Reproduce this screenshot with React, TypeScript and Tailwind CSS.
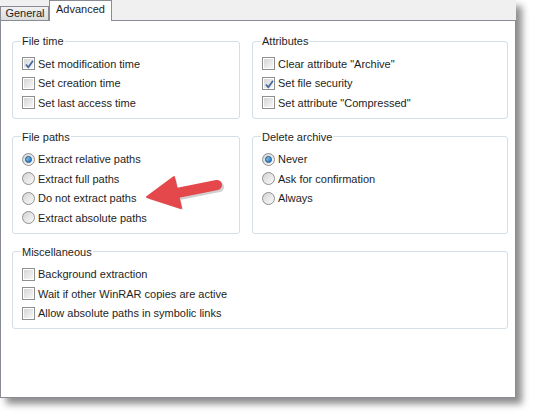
import type { ReactNode } from 'react';

type Opt = { label: string; on?: boolean };

function CheckBox({ on }: { on?: boolean }) {
  return (
    <span className="relative flex h-[13px] w-[13px] shrink-0 items-center justify-center border border-[#8e8f8f] bg-white p-px">
      <span className="h-full w-full bg-gradient-to-br from-[#d6d6d6] to-[#f7f7f7]" />
      {on && (
        <svg viewBox="0 0 11 11" className="absolute left-px top-px h-[11px] w-[11px]">
          <path d="M2 5.5 L4.3 8.3 L9 1.8" fill="none" stroke="#4a67a0" strokeWidth="1.8" />
        </svg>
      )}
    </span>
  );
}

function Radio({ on }: { on?: boolean }) {
  return (
    <span className="flex h-[13px] w-[13px] shrink-0 items-center justify-center rounded-full border border-[#8e8f8f] bg-gradient-to-br from-[#d3d3d3] to-[#fbfbfb]">
      {on && (
        <span className="h-[7px] w-[7px] rounded-full border border-[#1b4f8a] bg-gradient-to-br from-[#8ed0f5] to-[#1d6fbf]" />
      )}
    </span>
  );
}

function Group({ title, children, className = '' }: { title: string; children: ReactNode; className?: string }) {
  return (
    <fieldset className={`rounded-[3px] border border-[#d5dfe5] px-[9px] pb-[5px] pt-[6px] ${className}`}>
      <legend className="ml-[-1px] px-px leading-[14px]">{title}</legend>
      {children}
    </fieldset>
  );
}

function Options({ items, kind }: { items: Opt[]; kind: 'check' | 'radio' }) {
  return (
    <div className="flex flex-col">
      {items.map((it) => (
        <label key={it.label} className="flex h-[19.5px] items-center gap-[3px]">
          {kind === 'check' ? <CheckBox on={it.on} /> : <Radio on={it.on} />}
          <span className="whitespace-nowrap">{it.label}</span>
        </label>
      ))}
    </div>
  );
}

export default function App() {
  return (
    <div
      className="relative h-[415px] w-[533px] overflow-hidden bg-white text-[11px] text-[#1e1e1e]"
      style={{ fontFamily: '"Liberation Sans", Arial, sans-serif' }}
    >
      <div className="flex h-[398px] w-[516px] flex-col bg-[#f0f0f0] shadow-[6px_6px_7px_rgba(0,0,0,0.45)]">
        {/* tab strip */}
        <div className="flex h-[20px] items-end">
          <div className="flex h-[14px] w-[49px] items-center justify-center border border-b-0 border-[#898c95] bg-gradient-to-b from-[#f2f2f2] to-[#dcdcdc] pl-px">
            General
          </div>
          <div className="relative z-10 -mb-px flex h-[21px] w-[63px] items-center justify-center border border-b-0 border-[#898c95] bg-white pb-[3px]">
            Advanced
          </div>
        </div>

        {/* page */}
        <div className="flex-1 border border-[#898c95] bg-white pl-[11px] pr-[7px] pt-[13px]">
          <div className="grid grid-cols-[228px_256px] gap-x-[12px] gap-y-[11px]">
            <Group title="File time">
              <Options
                kind="check"
                items={[
                  { label: 'Set modification time', on: true },
                  { label: 'Set creation time' },
                  { label: 'Set last access time' },
                ]}
              />
            </Group>
            <Group title="Attributes">
              <Options
                kind="check"
                items={[
                  { label: 'Clear attribute "Archive"' },
                  { label: 'Set file security', on: true },
                  { label: 'Set attribute "Compressed"' },
                ]}
              />
            </Group>
            <Group title="File paths">
              <Options
                kind="radio"
                items={[
                  { label: 'Extract relative paths', on: true },
                  { label: 'Extract full paths' },
                  { label: 'Do not extract paths' },
                  { label: 'Extract absolute paths' },
                ]}
              />
            </Group>
            <Group title="Delete archive">
              <Options
                kind="radio"
                items={[{ label: 'Never', on: true }, { label: 'Ask for confirmation' }, { label: 'Always' }]}
              />
            </Group>
            <Group title="Miscellaneous" className="col-span-2">
              <Options
                kind="check"
                items={[
                  { label: 'Background extraction' },
                  { label: 'Wait if other WinRAR copies are active' },
                  { label: 'Allow absolute paths in symbolic links' },
                ]}
              />
            </Group>
          </div>
        </div>
      </div>

      {/* red callout arrow */}
      <svg className="pointer-events-none absolute left-0 top-0" width="533" height="415">
        <g transform="translate(2 2)" fill="#000" opacity="0.18">
          <path d="M172 194 L217 185" stroke="#000" strokeWidth="10" strokeLinecap="round" />
          <polygon points="147,197 174,177 181,208" />
        </g>
        <g fill="#e4484a">
          <path d="M172 194 L217 185" stroke="#e4484a" strokeWidth="10" strokeLinecap="round" />
          <polygon points="147,197 174,177 181,208" strokeLinejoin="round" stroke="#e4484a" strokeWidth="2" />
        </g>
      </svg>
    </div>
  );
}
